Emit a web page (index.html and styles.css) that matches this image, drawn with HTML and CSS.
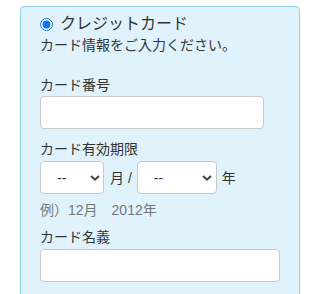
FILE: index.html
```html
<!DOCTYPE html>
<html lang="ja">
<head>
<meta charset="utf-8">
<link rel="stylesheet" href="styles.css">
</head>
<body>
<div class="card">
  <div class="title">
    <input type="radio" class="radio" name="pay" checked>
    <span>クレジットカード</span>
  </div>
  <p class="desc">カード情報をご入力ください。</p>

  <label class="lbl lbl-first">カード番号</label>
  <input type="text" class="field field-num">

  <label class="lbl lbl-exp">カード有効期限</label>
  <div class="expiry">
    <select class="sel sel-month"><option>--</option></select>
    <span class="unit unit-month">月 /</span>
    <select class="sel sel-year"><option>--</option></select>
    <span class="unit unit-year">年</span>
  </div>
  <p class="example">例）12月　2012年</p>

  <label class="lbl lbl-name">カード名義</label>
  <input type="text" class="field field-name">
</div>
</body>
</html>
```

FILE: styles.css
```css
html, body {
  margin: 0;
  padding: 0;
  background: #fff;
}
body {
  font-family: "Liberation Sans", "Noto Sans CJK JP", sans-serif;
  color: #333;
  font-size: 14px;
}
.card {
  box-sizing: border-box;
  width: 280px;
  margin: 6px 0 0 20px;
  padding: 6px 19px 20px;
  background: #e0f3fc;
  border: 1px solid #8dd0ee;
  border-radius: 4px;
}
.title {
  display: flex;
  align-items: center;
  height: 22px;
  font-size: 16px;
  line-height: 22px;
}
.radio {
  width: 13px;
  height: 13px;
  margin: 0 7px 0 0;
  accent-color: #0a74f0;
}
.desc {
  margin: 0;
  line-height: 20px;
}
.lbl {
  display: block;
  line-height: 20px;
}
.lbl-first { margin-top: 20px; }
.lbl-exp { margin-top: 10px; }
.lbl-name { margin-top: 7px; }
.field {
  display: block;
  box-sizing: border-box;
  height: 33px;
  background: #fff;
  border: 1px solid #c8c8c8;
  border-radius: 4px;
  padding: 0 8px;
  font: inherit;
}
.field-num {
  width: 224px;
  margin-top: 1px;
}
.field-name {
  width: 240px;
  margin-top: 2px;
}
.expiry {
  display: flex;
  align-items: center;
  margin-top: 2px;
  height: 33px;
}
.sel {
  -webkit-appearance: none;
  appearance: none;
  box-sizing: border-box;
  height: 33px;
  margin: 0;
  padding: 0 0 0 16px;
  background: #fff url("data:image/svg+xml;utf8,<svg xmlns='http://www.w3.org/2000/svg' width='10' height='6' viewBox='0 0 10 6'><path d='M1 1 L5 4.6 L9 1' fill='none' stroke='%23444' stroke-width='2'/></svg>") no-repeat;
  border: 1px solid #c8c8c8;
  border-radius: 4px;
  font-family: inherit;
  font-size: 14px;
  color: #333;
}
.sel-month {
  width: 64px;
  background-position: 49px 13px;
}
.sel-year {
  width: 80px;
  background-position: 64px 13px;
}
.unit {
  line-height: 20px;
}
.unit-month {
  margin: 0 5px 0 6px;
}
.unit-year {
  margin-left: 5px;
}
.example {
  margin: 6px 0 0;
  line-height: 20px;
  color: #777;
}
```
